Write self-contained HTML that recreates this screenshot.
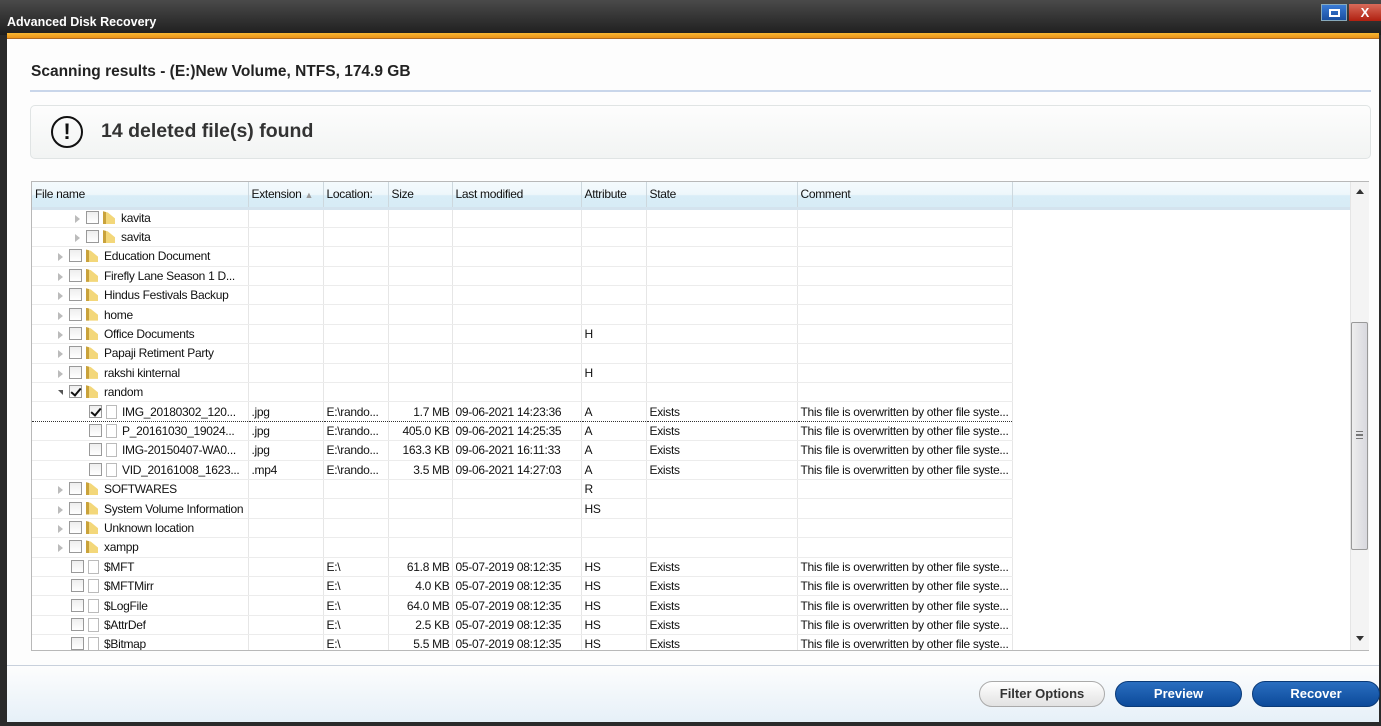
<!DOCTYPE html>
<html><head><meta charset="utf-8">
<style>
*{margin:0;padding:0;box-sizing:border-box}
body{width:1381px;height:726px;overflow:hidden;background:#2a2a2a;font-family:"Liberation Sans",Arial,sans-serif;position:relative}
.title{position:absolute;left:0;top:0;width:1381px;height:35px;background:linear-gradient(#4a4a4a,#1e1e1e);color:#fff;font-weight:bold;font-size:12.5px;padding:15px 0 0 7px}
.orange{position:absolute;left:7px;top:33px;width:1372px;height:6px;background:linear-gradient(#f7b733,#e8921a);border-bottom:1px solid #b06a20}
.win{position:absolute;left:7px;top:39px;width:1372px;height:683px;background:#fdfdfd}
.foot{position:absolute;left:7px;top:665px;width:1372px;height:57px;background:linear-gradient(#fdfdfd,#e6f0f8);border-top:1px solid #c8d0dc}
.h1{position:absolute;left:31px;top:63px;font-size:15.5px;font-weight:bold;color:#222}
.line{position:absolute;left:30px;top:90px;width:1341px;height:2px;background:#c9d6ea}
.info{position:absolute;left:30px;top:105px;width:1341px;height:54px;border:1px solid #e0e4e4;border-radius:5px;background:linear-gradient(#fdfdfd,#f2f4f3)}
.info .t{position:absolute;left:70px;top:14px;font-size:19.5px;font-weight:bold;color:#333}
.excl{position:absolute;left:20px;top:10px;width:32px;height:32px;border:2.5px solid #111;border-radius:50%;text-align:center;font-size:22px;font-weight:bold;line-height:27px;color:#111}
.grid{position:absolute;left:31px;top:181px;width:1338px;height:470px;border:1px solid #b8b8b8;background:#fff;overflow:hidden}
table{border-collapse:collapse;table-layout:fixed;font-size:12px;color:#111;letter-spacing:-0.3px}
th{height:26px;font-weight:normal;text-align:left;padding-left:3px;background:linear-gradient(#f4fafd 0%,#eef7fb 50%,#d9edf7 55%,#d7ecf6 100%);border-right:1px solid #cdd8de;border-bottom:3px solid #d4e3ee;white-space:nowrap}
td{height:19.4px;border-right:1px solid #e6e6e6;border-bottom:1px solid #ececec;padding-left:3px;white-space:nowrap;overflow:hidden}
td.n{padding-left:0}
td.r{text-align:right;padding-right:2px}
.ar{display:inline-block;width:0;height:0;border-left:5px solid #bbb;border-top:4px solid transparent;border-bottom:4px solid transparent;margin-right:6px;vertical-align:-1px}
.ard{display:inline-block;width:0;height:0;border-top:5px solid #555;border-left:5px solid transparent;margin-right:6px;vertical-align:1px}
.cb{display:inline-block;width:13px;height:13px;border:1px solid #999;background:linear-gradient(#eee,#fff);vertical-align:-2px;margin-right:4px;position:relative}
.cb.k:after{content:"";position:absolute;left:3px;top:0;width:4px;height:8px;border-right:2px solid #111;border-bottom:2px solid #111;transform:rotate(40deg)}
.fo{display:inline-block;width:12px;height:13px;background:linear-gradient(90deg,#c9a23b 0 3px,#f3d77a 3px);vertical-align:-2px;margin-right:6px;clip-path:polygon(0 0,40% 10%,100% 55%,100% 100%,0 100%)}
.fi{display:inline-block;width:11px;height:14px;border:1px solid #bbb;background:#fff;vertical-align:-3px;margin-right:5px}
.sel td{border-top:1px dotted #333;border-bottom:1px dotted #333}
.sb{position:absolute;left:1350px;top:182px;width:19px;height:468px;background:#f4f4f4;border-left:1px solid #e5e5e5}
.thumb{position:absolute;left:1351px;top:322px;width:17px;height:228px;border:1px solid #999;border-radius:2px;background:linear-gradient(90deg,#eee,#d8d8de)}
.btn{position:absolute;top:681px;height:26px;border-radius:13px;font-size:13px;font-weight:bold;text-align:center;line-height:24px}
.b1{left:979px;width:126px;background:linear-gradient(#fff,#e2e2e2);border:1px solid #aaa;color:#333}
.b2{background:linear-gradient(#2a6ec0,#0c4a9a);border:1px solid #0a3a78;color:#fff}
</style></head><body>
<div class="title">Advanced Disk Recovery</div>
<div style="position:absolute;left:1321px;top:4px;width:26px;height:17px;background:linear-gradient(#3a7bd5,#1a4fa0);border:1px solid #8ab"><div style="margin:4px auto;width:11px;height:8px;border:2px solid #fff"></div></div>
<div style="position:absolute;left:1349px;top:4px;width:32px;height:17px;background:linear-gradient(#d86b5a,#b02010);color:#fff;font-weight:bold;font-size:13px;text-align:center;line-height:17px">X</div>
<div class="orange"></div>
<div class="win"></div>
<div class="foot"></div>
<div class="h1">Scanning results - (E:)New Volume, NTFS, 174.9 GB</div>
<div class="line"></div>
<div class="info"><div class="excl">!</div><div class="t">14 deleted file(s) found</div></div>
<div class="grid">
<table>
<colgroup><col style="width:216px"><col style="width:75px"><col style="width:65px"><col style="width:64px"><col style="width:129px"><col style="width:65px"><col style="width:151px"><col style="width:215px"><col style="width:338px"></colgroup>
<tr><th>File name</th><th>Extension <span style="color:#999;font-size:9px">▲</span></th><th>Location:</th><th>Size</th><th>Last modified</th><th>Attribute</th><th>State</th><th>Comment</th><th style="border-right:none"></th></tr>
<tr><td class="n" style="padding-left:43px"><i class="ar"></i><i class="cb"></i><i class="fo"></i>kavita</td><td></td><td></td><td></td><td></td><td></td><td></td><td></td><td style="border:none"></td></tr>
<tr><td class="n" style="padding-left:43px"><i class="ar"></i><i class="cb"></i><i class="fo"></i>savita</td><td></td><td></td><td></td><td></td><td></td><td></td><td></td><td style="border:none"></td></tr>
<tr><td class="n" style="padding-left:26px"><i class="ar"></i><i class="cb"></i><i class="fo"></i>Education Document</td><td></td><td></td><td></td><td></td><td></td><td></td><td></td><td style="border:none"></td></tr>
<tr><td class="n" style="padding-left:26px"><i class="ar"></i><i class="cb"></i><i class="fo"></i>Firefly Lane Season 1 D...</td><td></td><td></td><td></td><td></td><td></td><td></td><td></td><td style="border:none"></td></tr>
<tr><td class="n" style="padding-left:26px"><i class="ar"></i><i class="cb"></i><i class="fo"></i>Hindus Festivals Backup</td><td></td><td></td><td></td><td></td><td></td><td></td><td></td><td style="border:none"></td></tr>
<tr><td class="n" style="padding-left:26px"><i class="ar"></i><i class="cb"></i><i class="fo"></i>home</td><td></td><td></td><td></td><td></td><td></td><td></td><td></td><td style="border:none"></td></tr>
<tr><td class="n" style="padding-left:26px"><i class="ar"></i><i class="cb"></i><i class="fo"></i>Office Documents</td><td></td><td></td><td></td><td></td><td>H</td><td></td><td></td><td style="border:none"></td></tr>
<tr><td class="n" style="padding-left:26px"><i class="ar"></i><i class="cb"></i><i class="fo"></i>Papaji Retiment Party</td><td></td><td></td><td></td><td></td><td></td><td></td><td></td><td style="border:none"></td></tr>
<tr><td class="n" style="padding-left:26px"><i class="ar"></i><i class="cb"></i><i class="fo"></i>rakshi kinternal</td><td></td><td></td><td></td><td></td><td>H</td><td></td><td></td><td style="border:none"></td></tr>
<tr><td class="n" style="padding-left:26px"><i class="ard"></i><i class="cb k"></i><i class="fo"></i>random</td><td></td><td></td><td></td><td></td><td></td><td></td><td></td><td style="border:none"></td></tr>
<tr class="sel"><td class="n" style="padding-left:57px"><i class="cb k"></i><i class="fi"></i>IMG_20180302_120...</td><td>.jpg</td><td>E:\rando...</td><td class="r">1.7 MB</td><td>09-06-2021 14:23:36</td><td>A</td><td>Exists</td><td>This file is overwritten by other file syste...</td><td style="border:none"></td></tr>
<tr><td class="n" style="padding-left:57px"><i class="cb"></i><i class="fi"></i>P_20161030_19024...</td><td>.jpg</td><td>E:\rando...</td><td class="r">405.0 KB</td><td>09-06-2021 14:25:35</td><td>A</td><td>Exists</td><td>This file is overwritten by other file syste...</td><td style="border:none"></td></tr>
<tr><td class="n" style="padding-left:57px"><i class="cb"></i><i class="fi"></i>IMG-20150407-WA0...</td><td>.jpg</td><td>E:\rando...</td><td class="r">163.3 KB</td><td>09-06-2021 16:11:33</td><td>A</td><td>Exists</td><td>This file is overwritten by other file syste...</td><td style="border:none"></td></tr>
<tr><td class="n" style="padding-left:57px"><i class="cb"></i><i class="fi"></i>VID_20161008_1623...</td><td>.mp4</td><td>E:\rando...</td><td class="r">3.5 MB</td><td>09-06-2021 14:27:03</td><td>A</td><td>Exists</td><td>This file is overwritten by other file syste...</td><td style="border:none"></td></tr>
<tr><td class="n" style="padding-left:26px"><i class="ar"></i><i class="cb"></i><i class="fo"></i>SOFTWARES</td><td></td><td></td><td></td><td></td><td>R</td><td></td><td></td><td style="border:none"></td></tr>
<tr><td class="n" style="padding-left:26px"><i class="ar"></i><i class="cb"></i><i class="fo"></i>System Volume Information</td><td></td><td></td><td></td><td></td><td>HS</td><td></td><td></td><td style="border:none"></td></tr>
<tr><td class="n" style="padding-left:26px"><i class="ar"></i><i class="cb"></i><i class="fo"></i>Unknown location</td><td></td><td></td><td></td><td></td><td></td><td></td><td></td><td style="border:none"></td></tr>
<tr><td class="n" style="padding-left:26px"><i class="ar"></i><i class="cb"></i><i class="fo"></i>xampp</td><td></td><td></td><td></td><td></td><td></td><td></td><td></td><td style="border:none"></td></tr>
<tr><td class="n" style="padding-left:39px"><i class="cb"></i><i class="fi"></i>$MFT</td><td></td><td>E:\</td><td class="r">61.8 MB</td><td>05-07-2019 08:12:35</td><td>HS</td><td>Exists</td><td>This file is overwritten by other file syste...</td><td style="border:none"></td></tr>
<tr><td class="n" style="padding-left:39px"><i class="cb"></i><i class="fi"></i>$MFTMirr</td><td></td><td>E:\</td><td class="r">4.0 KB</td><td>05-07-2019 08:12:35</td><td>HS</td><td>Exists</td><td>This file is overwritten by other file syste...</td><td style="border:none"></td></tr>
<tr><td class="n" style="padding-left:39px"><i class="cb"></i><i class="fi"></i>$LogFile</td><td></td><td>E:\</td><td class="r">64.0 MB</td><td>05-07-2019 08:12:35</td><td>HS</td><td>Exists</td><td>This file is overwritten by other file syste...</td><td style="border:none"></td></tr>
<tr><td class="n" style="padding-left:39px"><i class="cb"></i><i class="fi"></i>$AttrDef</td><td></td><td>E:\</td><td class="r">2.5 KB</td><td>05-07-2019 08:12:35</td><td>HS</td><td>Exists</td><td>This file is overwritten by other file syste...</td><td style="border:none"></td></tr>
<tr><td class="n" style="padding-left:39px"><i class="cb"></i><i class="fi"></i>$Bitmap</td><td></td><td>E:\</td><td class="r">5.5 MB</td><td>05-07-2019 08:12:35</td><td>HS</td><td>Exists</td><td>This file is overwritten by other file syste...</td><td style="border:none"></td></tr>
</table>
</div>
<div class="sb"><div style="position:absolute;left:5px;top:7px;border-bottom:5px solid #333;border-left:4px solid transparent;border-right:4px solid transparent"></div><div style="position:absolute;left:5px;top:454px;border-top:5px solid #333;border-left:4px solid transparent;border-right:4px solid transparent"></div></div>
<div class="thumb"><div style="position:absolute;left:4px;top:108px;width:7px;height:8px;border-top:1px solid #777;border-bottom:1px solid #777"><div style="margin-top:2px;border-top:1px solid #777;height:2px;border-bottom:1px solid #777"></div></div></div>
<div class="btn b1">Filter Options</div>
<div class="btn b2" style="left:1115px;width:127px">Preview</div>
<div class="btn b2" style="left:1252px;width:128px">Recover</div>
</body></html>
